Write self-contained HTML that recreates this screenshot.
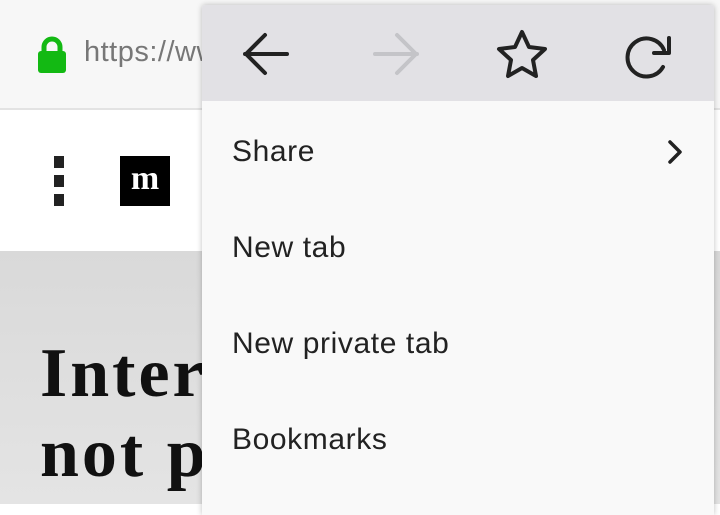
<!DOCTYPE html><html><head><style>
body{margin:0;width:720px;height:504px;overflow:hidden;position:relative;font-family:"Liberation Sans",sans-serif;background:#fff}
.top{position:absolute;left:0;top:0;width:720px;height:108px;background:#f7f7f7;border-bottom:2px solid #e3e3e3}
.url{position:absolute;left:84px;top:36px;font-size:29px;color:#777;letter-spacing:0.5px}
.gray{position:absolute;left:0;top:251px;width:720px;height:253px;background:linear-gradient(180deg,#d9d9d9,#e4e4e4)}
.h{position:absolute;left:40px;font-family:"Liberation Serif",serif;font-weight:bold;font-size:70px;color:#111;letter-spacing:3px}
.menu{position:absolute;left:202px;top:5px;width:512px;height:510px;background:#f9f9f9;box-shadow:0 0 6px rgba(0,0,0,.25);border-radius:3px 3px 0 0}
.bar{height:96px;background:#e2e1e5;border-radius:3px 3px 0 0}
.it{position:absolute;left:30px;font-size:30px;color:#222;letter-spacing:0.6px}
.d{width:10px;height:12px;background:#222;margin-bottom:7px}
</style></head><body>
<div class="top">
<svg style="position:absolute;left:37px;top:36px" width="30" height="37" viewBox="0 0 30 37"><path d="M7 16V11a8 8 0 0 1 16 0v5" fill="none" stroke="#13b913" stroke-width="5"/><rect x="1" y="15" width="28" height="22" rx="3" fill="#13b913"/></svg>
<div class="url">https://www</div></div>
<div style="position:absolute;left:54px;top:156px;width:10px;height:50px">
<div class="d"></div><div class="d"></div><div class="d"></div></div>
<div style="position:absolute;left:120px;top:156px;width:50px;height:50px;background:#000;color:#fff;font:bold 34px 'Liberation Serif',serif;text-align:center;line-height:46px">m</div>
<div class="gray"></div>
<div class="h" style="top:334px">Inter</div>
<div class="h" style="top:414px">not p</div>
<div class="menu"><div class="bar"></div>
<svg style="position:absolute;left:0;top:0" width="512" height="96" fill="none" stroke-linecap="round" stroke-linejoin="round" stroke-width="4">
<path d="M43 49H85M63 30L44 49L63 68" stroke="#222"/>
<path d="M173 49H215M195 30L214 49L195 68" stroke="#c4c4c8"/>
<path d="M320 27L327 42L343 44L331 55L334 71L320 63L306 71L309 55L297 44L313 42Z" stroke="#222"/>
<path d="M462 45A19 19 0 1 0 461 62" stroke="#222"/><path d="M467 33V48H452" stroke="#222"/>
</svg>
<div class="it" style="top:130px">Share</div>
<svg style="position:absolute;left:465px;top:134px" width="16" height="26"><path d="M3 3L13 13L3 23" fill="none" stroke="#222" stroke-width="3.5" stroke-linecap="round" stroke-linejoin="round"/></svg>
<div class="it" style="top:226px">New tab</div>
<div class="it" style="top:322px">New private tab</div>
<div class="it" style="top:418px">Bookmarks</div>
</div>
</body></html>
